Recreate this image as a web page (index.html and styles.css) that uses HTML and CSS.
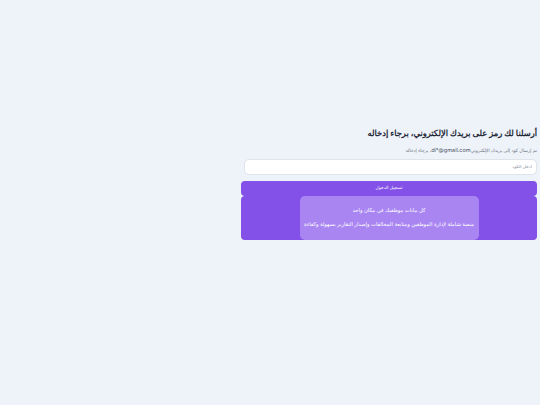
FILE: index.html
```html
<!DOCTYPE html>
<html lang="ar" dir="rtl">
<head>
  <meta charset="UTF-8" />
  <meta name="viewport" content="width=device-width, initial-scale=1.0"/>
  <title>تسجيل الدخول</title>
  <link rel="stylesheet" href="styles.css">
</head>
<body>
  <div class="container">
    <h1 class="title">أرسلنا لك رمز على بريدك الإلكتروني، برجاء إدخاله</h1>
    <p class="hint">تم إرسال كود إلى بريدك الإلكتروني<span dir="ltr">di*@gmail.com</span>، برجاء إدخاله</p>

    <form class="code-form">
      <input class="code-input" type="text" placeholder="ادخل الكود" />
      <button class="submit" type="button">تسجيل الدخول</button>
    </form>

    <div class="promo">
      <div class="promo-card">
        <p>كل بيانات موظفيك في مكان واحد</p>
        <p>منصة شاملة لإدارة الموظفين ومتابعة المخالفات وإصدار التقارير بسهولة وكفاءة</p>
      </div>
    </div>
  </div>
</body>
</html>
```

FILE: styles.css
```css
* {
  box-sizing: border-box;
}

body {
  font-family: Inter, sans-serif;
  text-rendering: geometricPrecision;
  margin: 0;
  height: 405px;
  overflow: hidden;
  background: #eef2f9;
  display: flex;
  flex-direction: column;
  justify-content: center;
}

.container {
  width: 296px;
  margin-right: 3px;
  padding-bottom: 40px;
}

.title {
  margin: 0 0 6px;
  padding-top: 1px;
  font-size: 8.35px;
  line-height: 14px;
  font-weight: 700;
  color: #1f2937;
}

.hint {
  margin: 0 0 3px;
  font-size: 4.6px;
  line-height: 8px;
  color: #6b7280;
}

.hint span {
  font-size: 5.5px;
  color: #4b5563;
}

.code-form {
  display: flex;
  flex-direction: column;
  gap: 6px;
}

.code-input {
  width: 293px;
  height: 16px;
  padding: 1px 4px 0;
  font-family: inherit;
  font-size: 4.4px;
  text-rendering: geometricPrecision;
  background: #fff;
  border: 1px solid #dfe3ea;
  border-radius: 5px;
  outline: none;
}

.code-input::placeholder {
  color: #8b93a0;
}

.submit {
  height: 15px;
  padding: 1px 0 0;
  font-family: inherit;
  font-size: 4.4px;
  text-rendering: geometricPrecision;
  color: #fff;
  background: #8350e8;
  border: none;
  border-radius: 4px;
}

.promo {
  height: 44px;
  display: flex;
  justify-content: center;
  background: #8350e8;
  border-radius: 4px;
}

.promo-card {
  width: 179px;
  padding-top: 12px;
  text-align: center;
  font-size: 5.25px;
  color: #fff;
  background: #a985f2;
  border-radius: 5px;
}

.promo-card p {
  margin: 0 0 7px;
  line-height: 7px;
}
```
